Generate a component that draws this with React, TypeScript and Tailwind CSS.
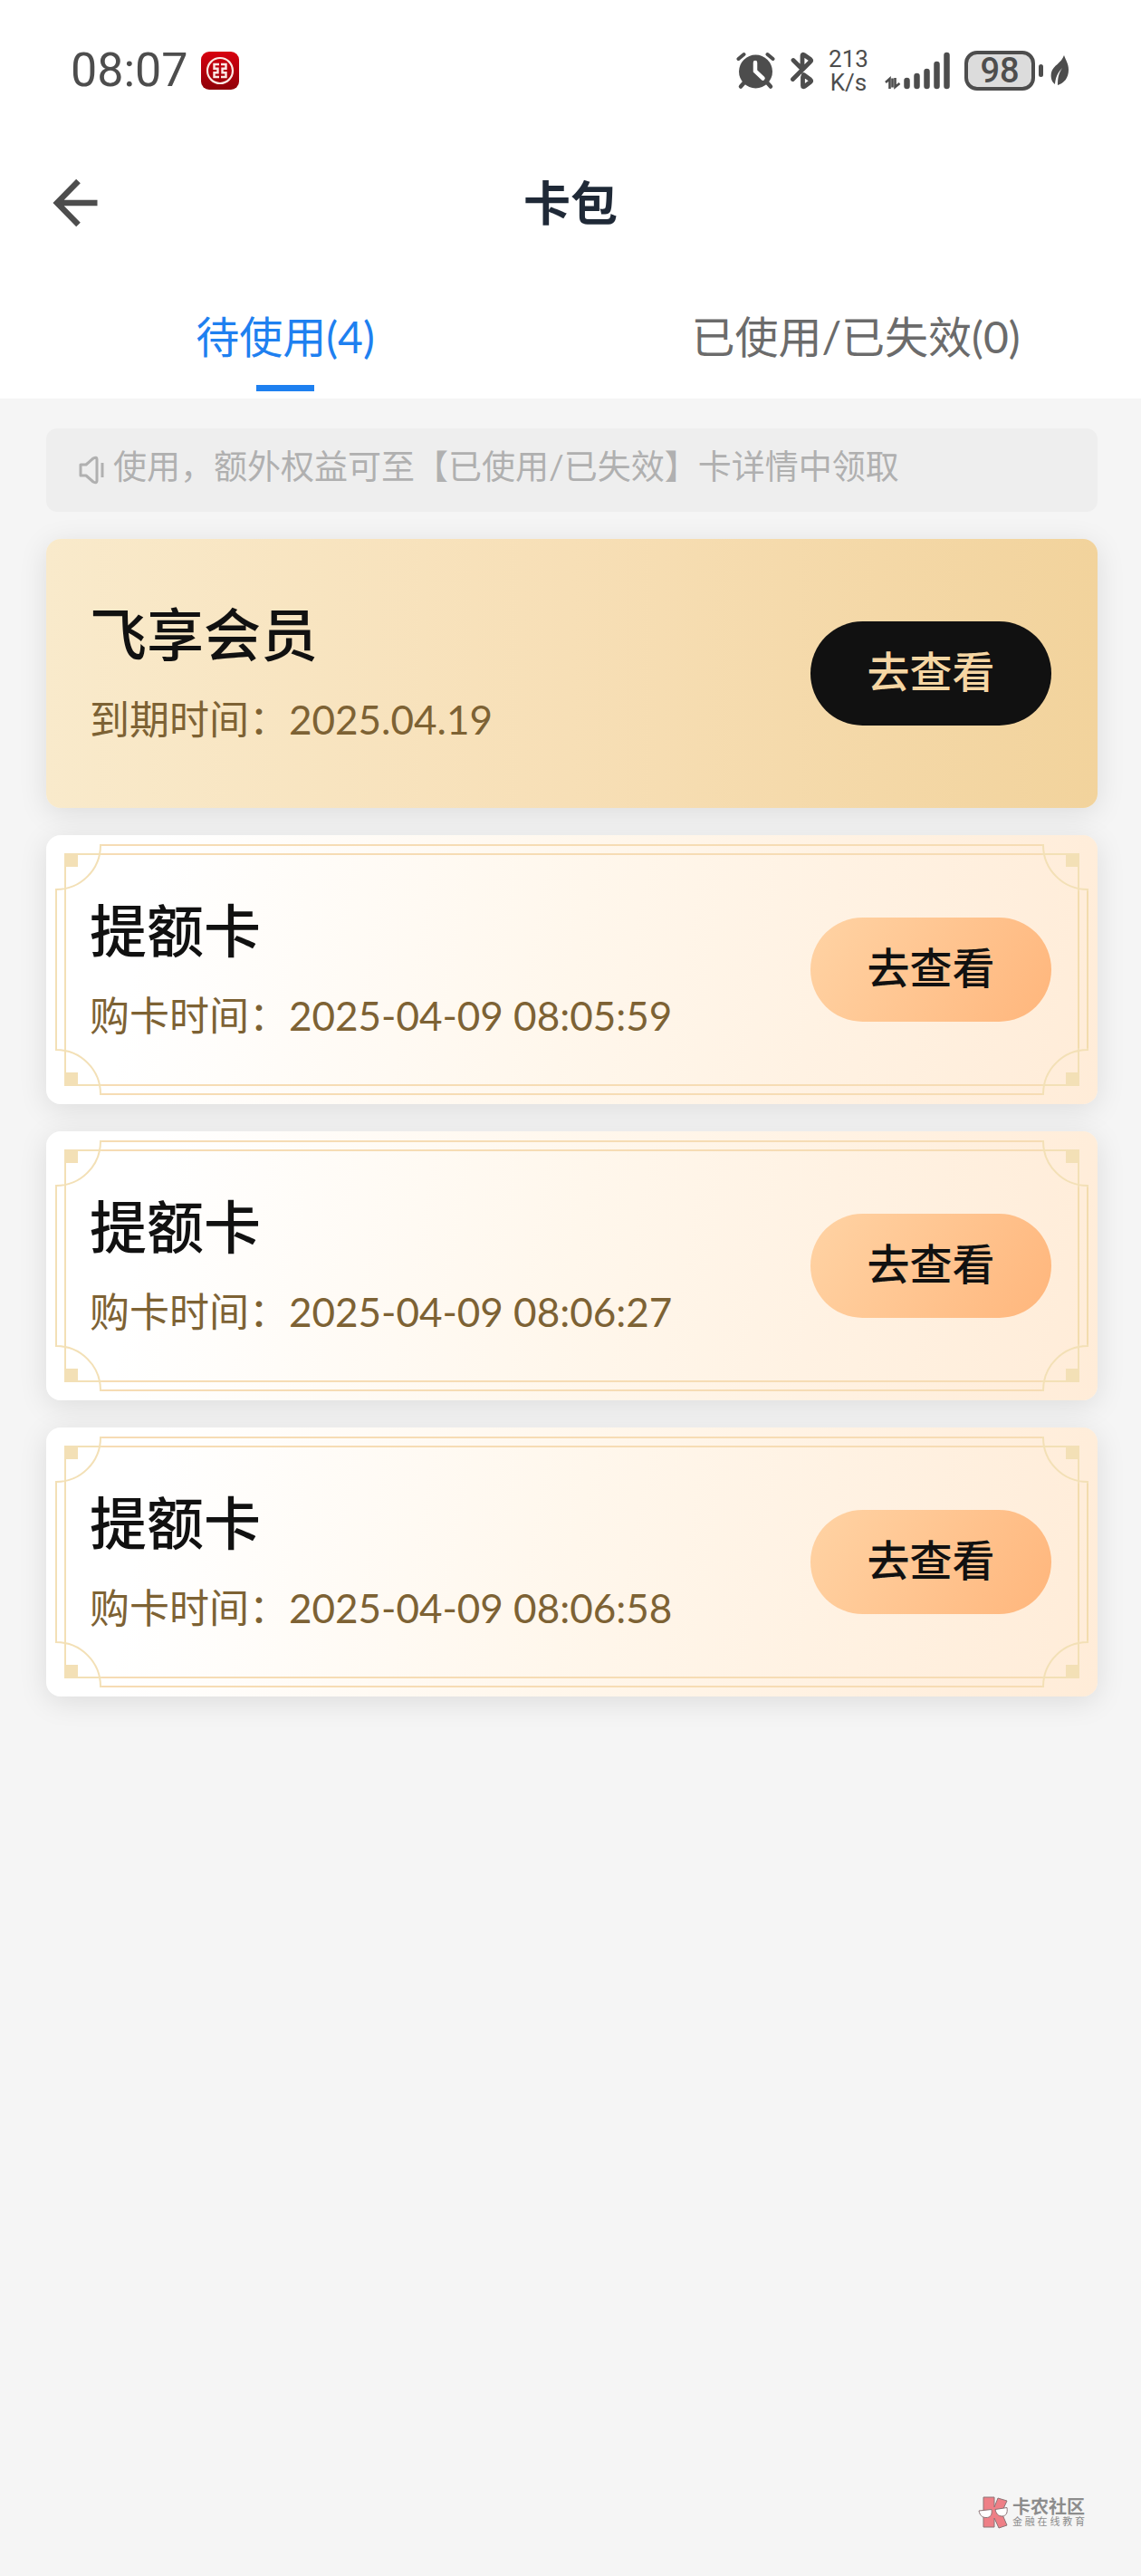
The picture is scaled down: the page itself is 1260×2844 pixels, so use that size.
import { useId } from "react"

const cards = [
  { title: "飞享会员", label: "到期时间：", time: "2025.04.19", vip: true },
  { title: "提额卡", label: "购卡时间：", time: "2025-04-09 08:05:59", vip: false },
  { title: "提额卡", label: "购卡时间：", time: "2025-04-09 08:06:27", vip: false },
  { title: "提额卡", label: "购卡时间：", time: "2025-04-09 08:06:58", vip: false },
]

function StatusBar() {
  return (
    <div className="flex h-[156px] items-center justify-between pl-[78px] pr-[79px] text-[#4d4d4d]">
      <div className="flex items-center gap-3.5">
        <span className="font-['Roboto',sans-serif] text-[52px] leading-[60px]">08:07</span>
        <BankIcon />
      </div>
      <div className="flex items-center">
        <AlarmIcon />
        <BluetoothIcon />
        <div className="ml-3.5 w-12 text-center font-['Roboto',sans-serif] text-[26px] leading-[26px]">
          213
          <br />
          K/s
        </div>
        <SignalIcon />
        <div className="ml-4 flex h-11 w-[78px] items-center justify-center rounded-[14px] border-4 border-[#4d4d4d] bg-[#dcdcdc] font-['Roboto',sans-serif] text-[38px] font-medium leading-none">
          98
        </div>
        <div className="ml-1 h-3.5 w-[5px] rounded-full bg-[#4d4d4d]" />
        <LeafIcon />
      </div>
    </div>
  )
}

function BankIcon() {
  const id = useId()
  return (
    <svg width="42" height="42" viewBox="0 0 42 42" fill="none">
      <defs>
        <linearGradient id={id} x1="0" y1="0" x2="0" y2="1">
          <stop offset="0" stopColor="#d8000f" />
          <stop offset="1" stopColor="#8f0008" />
        </linearGradient>
      </defs>
      <rect width="42" height="42" rx="9" fill={`url(#${id})`} />
      <circle cx="21" cy="21" r="14" stroke="#fbe9e4" strokeWidth="2.2" />
      <path
        d="M20 14h-5.500v4.700h4v4.600h-4V28H20M22 14h5.500v4.700h-4v4.600h4V28H22"
        stroke="#fbe9e4"
        strokeWidth="2.4"
      />
    </svg>
  )
}

function AlarmIcon() {
  return (
    <svg width="44" height="42" viewBox="0 0 44 42" fill="none" stroke="#4d4d4d" strokeLinecap="round">
      <circle cx="21.500" cy="22" r="18.500" fill="#4d4d4d" stroke="none" />
      <path d="M2.500 8l6-5M34.500 3l6 5" strokeWidth="4" />
      <path d="M9 34l-4 4.500M34 34l4 4.500" strokeWidth="4.500" />
      <path d="M21 12v9.500l8.500 8" stroke="#fff" strokeWidth="4.500" />
    </svg>
  )
}

function BluetoothIcon() {
  return (
    <svg className="ml-4" width="26" height="42" viewBox="0 0 26 42" fill="none">
      <path
        d="M3 9.500l10 10V4.500q0-2 1.800-1l7.200 5q1.500 1.200 0 2.500L2.500 30.500M14.500 25.500l7.500 5.500q1.500 1.200 0 2.500l-6.700 5q-1.800 1-1.800-1V28"
        stroke="#4d4d4d"
        strokeWidth="4.800"
        strokeLinecap="round"
        strokeLinejoin="round"
      />
    </svg>
  )
}

function SignalIcon() {
  return (
    <svg className="ml-3.5" width="74" height="42" viewBox="0 0 74 42" fill="none" stroke="#4d4d4d">
      <path d="M3 34l4.500-4v11M13.500 29v10l5-4M10.500 29.500v10" strokeWidth="2.600" />
      <path d="M26.500 32v6M37.500 27v11M48.500 22v16M59.500 14v24M70.500 4v34" strokeWidth="6.500" strokeLinecap="round" />
    </svg>
  )
}

function LeafIcon() {
  return (
    <svg className="ml-2" width="21" height="34" viewBox="0 0 21 34">
      <path d="M15 0c2 6 5 9 5 16 0 9-5 15-12 17 0-8 1-13 5-19-5 5-7.500 11-8 18C1 29 0 24 1 19 3 11 12 9 15 0z" fill="#4d4d4d" />
    </svg>
  )
}

function SpeakerIcon() {
  return (
    <svg width="28" height="32" viewBox="0 0 28 32" fill="none" stroke="#b0b0b0" strokeWidth="3">
      <path d="M2 10h6l8-7q4-2 4 1v24q0 3-4 1l-8-7H2z" strokeLinejoin="round" />
      <path d="M26 8v16" />
    </svg>
  )
}

// one corner of the gold frame, flipped for the other three
function Corner({ className }: { className: string }) {
  return (
    <svg className={`absolute h-[52px] w-[52px] ${className}`} viewBox="0 0 52 52" fill="none" stroke="#f3e0b6" strokeWidth="2">
      <path d="M52 1H50A49 49 0 0 1 1 50V52M52 11H11V52" />
      <path d="M10 10h15v15H10z" fill="#f3e0b6" stroke="none" />
    </svg>
  )
}

function Frame() {
  return (
    <div className="pointer-events-none absolute inset-2.5">
      <Corner className="left-0 top-0" />
      <Corner className="right-0 top-0 -scale-x-100" />
      <Corner className="bottom-0 left-0 -scale-y-100" />
      <Corner className="bottom-0 right-0 -scale-100" />
      <div className="absolute inset-x-[52px] top-0 h-3 border-y-2 border-[#f6dcb4]" />
      <div className="absolute inset-x-[52px] bottom-0 h-3 border-y-2 border-[#f6dcb4]" />
      <div className="absolute inset-y-[52px] left-0 w-3 border-x-2 border-[#f3e0b6]" />
      <div className="absolute inset-y-[52px] right-0 w-3 border-x-2 border-[#f3dcae]" />
    </div>
  )
}

function Card({ title, label, time, vip }: (typeof cards)[number]) {
  return (
    <li
      className={`relative flex h-[297px] items-center justify-between rounded-2xl pl-12 pr-[51px] shadow-[0_6px_32px_rgba(0,0,0,0.10)] ${
        vip
          ? "bg-linear-to-r from-[#f9eacb] via-[#f7dfb6] to-[#f2d39c]"
          : "bg-linear-[100deg] from-white from-10% via-[#fff7ec] via-50% to-[#ffecd8]"
      }`}
    >
      {!vip && <Frame />}
      <div className="pb-1">
        <h2 className="text-[63px] font-medium leading-[84px] text-[#111]">{title}</h2>
        <p className="mt-5 text-[44px] leading-[64px] text-[#7d6234]">
          {label}
          {time}
        </p>
      </div>
      <button
        className={`relative h-[115px] w-[266px] rounded-full pb-1 text-[47px] font-medium leading-none ${
          vip ? "bg-[#111] text-[#f5d6a3]" : "bg-linear-120 from-[#ffd3a4] to-[#ffb67c] text-[#111]"
        }`}
      >
        去查看
      </button>
    </li>
  )
}

function Watermark() {
  return (
    <div className="flex items-center gap-1 text-[#8c8c8c]">
      <svg width="34" height="36" viewBox="0 0 34 36" stroke="#8c7476" strokeWidth="1">
        <path d="M6 1h12v11l4-10 10 3-6 13 6 14-9 3-5-11v10H6z" fill="#ee7f86" />
        <path d="M1 16l14-1.500c1 7-2 9-6 9-5 0-7-3-8-7.500zM19 14.500l13-2c1 6-1 9-5 9.500-5 0-7-3-8-7.500z" fill="#fff" />
      </svg>
      <div>
        <div className="text-[20px] font-bold leading-5">卡农社区</div>
        <div className="flex justify-between text-[11px] leading-3.5">
          {[..."金融在线教育"].map((c) => (
            <span key={c}>{c}</span>
          ))}
        </div>
      </div>
    </div>
  )
}

export default function App() {
  return (
    <div className="flex min-h-screen flex-col bg-[#f5f5f5] font-['Lato','Noto_Sans_CJK_SC',sans-serif]">
      <header className="bg-white">
        <StatusBar />
        <div className="grid h-[136px] grid-cols-[1fr_auto_1fr] items-center px-[58px]">
          <button aria-label="返回" className="w-fit">
            <svg width="50" height="54" viewBox="0 0 50 54" fill="none" stroke="#4d4d4d" strokeWidth="6.500">
              <path d="M28.500 3L5 27l23.500 24M5 27h44.500" />
            </svg>
          </button>
          <h1 className="text-[52px] font-bold leading-none text-[#1f2937]">卡包</h1>
        </div>
        <nav className="grid h-[148px] grid-cols-2 text-[48px] leading-[64px]">
          <button className="relative pb-2 pt-5 text-[#1e80f0]">
            待使用(4)
            <span className="absolute bottom-2 left-1/2 h-[7px] w-16 -translate-x-1/2 bg-[#1e80f0]" />
          </button>
          <button className="pb-2 pt-5 text-[#6b6b6b]">已使用/已失效(0)</button>
        </nav>
      </header>

      <main className="pl-[51px] pr-12 pt-[33px]">
        <div className="flex h-[92px] items-center gap-2.5 rounded-xl bg-[#eee] pl-9 text-[37px] text-[#b0b0b0]">
          <SpeakerIcon />
          <p className="pb-2.5 leading-none">使用，额外权益可至【已使用/已失效】卡详情中领取</p>
        </div>
        <ul className="mt-[30px] flex flex-col gap-[30px]">
          {cards.map((card) => (
            <Card key={card.time} {...card} />
          ))}
        </ul>
      </main>

      <footer className="mt-auto flex justify-end pb-[52px] pr-[62px]">
        <Watermark />
      </footer>
    </div>
  )
}
